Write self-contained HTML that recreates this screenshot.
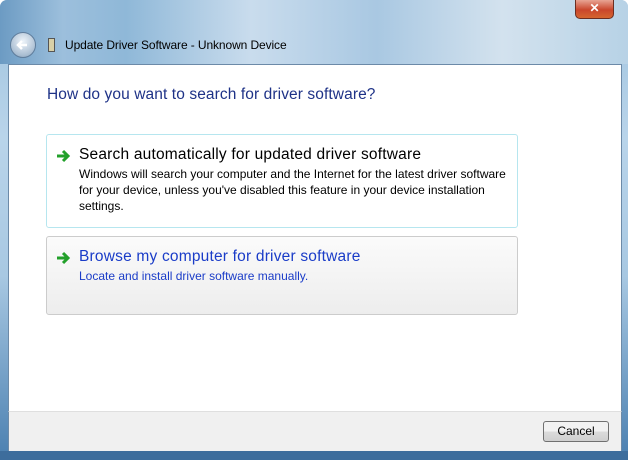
<!DOCTYPE html>
<html><head><style>
body{margin:0;width:628px;height:460px;overflow:hidden;font-family:"Liberation Sans",sans-serif;}
.frame{position:absolute;left:0;top:0;width:628px;height:460px;background:linear-gradient(180deg,#9fc3de 0%,#b9d4ea 30%,#a8c8e2 60%,#4a7fb0 100%);border-radius:7px 7px 0 0;}
.frame:before{content:"";position:absolute;left:0;top:0;right:0;height:64px;background:linear-gradient(90deg,#6c9bc3 0%,#9cbfdc 10%,#8fb8d8 20%,#c9dced 40%,#a9c8e2 60%,#d3e2ee 80%,#b7d2e6 100%);border-radius:7px 7px 0 0;}
.content{position:absolute;left:8px;top:64px;width:612px;height:347px;background:#fff;border:1px solid #6c8aa8;border-bottom:none;}
.footer{position:absolute;left:8px;top:411px;width:612px;height:40px;background:#f0f0f0;border:1px solid #6c8aa8;border-top:1px solid #dfdfdf;}
.bottom{position:absolute;left:0;top:451px;width:628px;height:9px;background:#3d6d9c;}
.close{position:absolute;left:575px;top:0;width:37px;height:18px;background:linear-gradient(#e8a493,#c9462c 55%,#d5652f);border:1px solid #6b2e22;border-top:none;border-radius:0 0 5px 5px;color:#fff;font-weight:bold;font-size:12px;text-align:center;line-height:17px;}
.back{position:absolute;left:10px;top:32px;width:24px;height:24px;border-radius:50%;background:radial-gradient(circle at 50% 35%,#eef4fa,#aabed2 70%,#7d97b2);border:1px solid #5f7d9c;}
.title{position:absolute;left:65px;top:38px;font-size:12px;color:#000;letter-spacing:-0.1px;}
.dev{position:absolute;left:48px;top:38px;width:5px;height:12px;border:1px solid #555;background:#d8d0a8;}
h1{position:absolute;left:47px;top:86px;margin:0;font-weight:normal;font-size:15.5px;color:#1e3287;letter-spacing:0.1px;}
.opt{position:absolute;left:46px;width:470px;border-radius:3px;}
.o1{top:134px;height:92px;border:1px solid #b6e6ef;background:#fff;}
.o2{top:236px;height:77px;border:1px solid #ccc;background:linear-gradient(#fbfbfb,#ededed);}
.arr{position:absolute;left:9px;top:14px;}
.h{position:absolute;left:32px;top:11px;font-size:15.5px;letter-spacing:0.2px;}
.d{position:absolute;left:32px;top:31px;font-size:12px;line-height:16px;width:440px;white-space:nowrap;}
.btn{position:absolute;left:543px;top:421px;width:64px;height:19px;border:1px solid #707070;border-radius:3px;background:linear-gradient(#f2f2f2 50%,#dcdcdc 50%,#cfcfcf);font-size:12px;text-align:center;line-height:19px;}
</style></head><body>
<div class="frame"></div>
<div class="close">✕</div>
<div class="back"><svg width="24" height="24"><path d="M16 12H8M11 8l-4 4 4 4" stroke="#fff" stroke-width="2.5" fill="none"/></svg></div>
<div class="dev"></div>
<div class="title">Update Driver Software - Unknown Device</div>
<div class="content"></div>
<div class="footer"></div>
<div class="bottom"></div>
<h1>How do you want to search for driver software?</h1>
<div class="opt o1"><svg class="arr" width="16" height="14"><path d="M1 7h10M7 2l5 5-5 5" stroke="#22a02a" stroke-width="3" fill="none"/></svg>
<div class="h" style="color:#000">Search automatically for updated driver software</div>
<div class="d" style="color:#000">Windows will search your computer and the Internet for the latest driver software<br>for your device, unless you've disabled this feature in your device installation<br>settings.</div></div>
<div class="opt o2"><svg class="arr" width="16" height="14"><path d="M1 7h10M7 2l5 5-5 5" stroke="#22a02a" stroke-width="3" fill="none"/></svg>
<div class="h" style="color:#1a3cc8">Browse my computer for driver software</div>
<div class="d" style="color:#1a3cc8">Locate and install driver software manually.</div></div>
<div class="btn">Cancel</div>
</body></html>
